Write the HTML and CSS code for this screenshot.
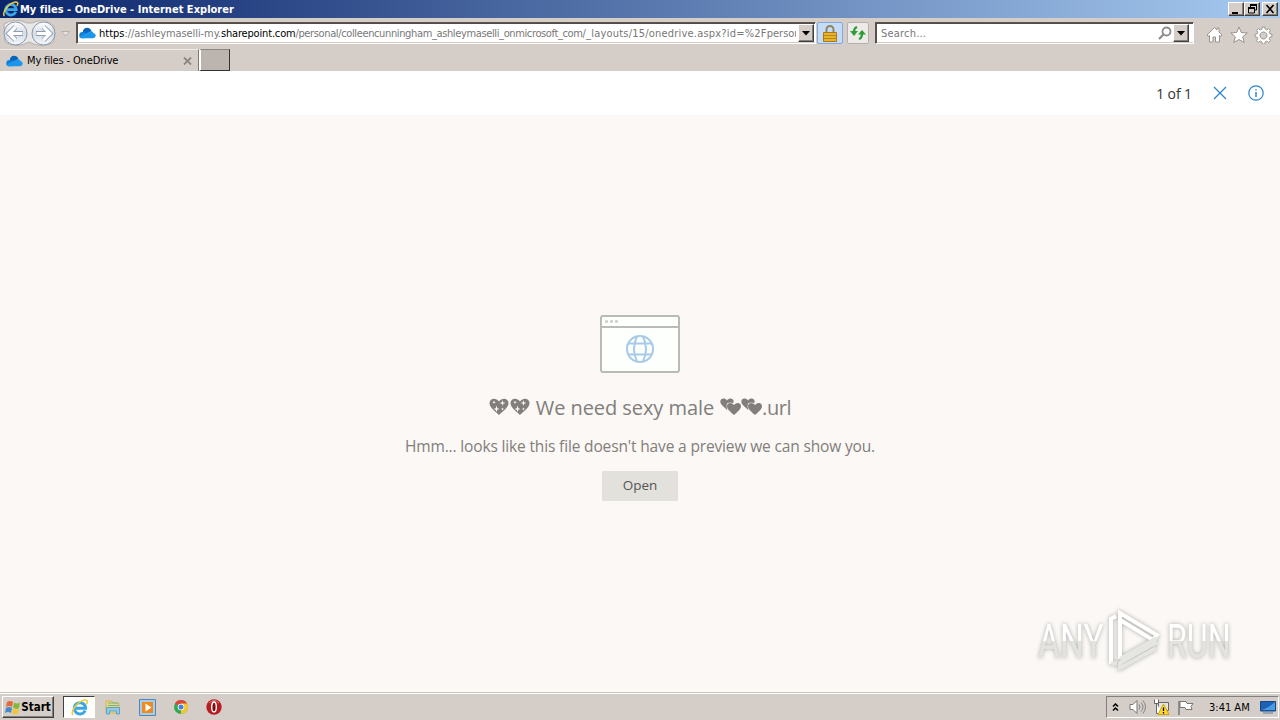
FILE: index.html
```
<!DOCTYPE html>
<html lang="en">
<head>
    <meta charset="UTF-8">
    <meta name="viewport" content="width=device-width, initial-scale=1.0">
    <title>My files - OneDrive</title>
    <link rel="stylesheet" href="styles.css">
</head>
<body>
    <!-- shared shapes -->
    <svg class="defs" width="0" height="0">
        <defs>
            <linearGradient id="orb" x1="0" y1="0" x2="0" y2="1">
                <stop offset="0" stop-color="#ffffff"/>
                <stop offset="0.5" stop-color="#d3dbe6"/>
                <stop offset="1" stop-color="#f6f9fd"/>
            </linearGradient>
            <symbol id="cloud" viewBox="0 0 16 11">
                <path d="M3.500 5C3.500 2 5.500 .5 7.500 .5c2 0 3.500 1 4.200 3L9 7 3 9z" fill="#0a64b8"/>
                <path d="M3 10.500a3 3 0 0 1 .5-6c2 0 3 1 4.500 2L6 10.500z" fill="#1180d8"/>
                <path d="M3 10.500c-1.500 0-2.500-.7-2.800-1.500L9 4.500c1-1 4.300-1 4.600 1.200 3 .4 2.800 4.600-.6 4.800z" fill="#1c96ec"/>
            </symbol>
            <symbol id="ie" viewBox="0 0 16 16">
                <path d="M13.300 10.800A5.300 5.300 0 1 1 13.700 8.600H4.500" fill="none" stroke="#3ba5e6" stroke-width="2.800"/>
                <path d="M2 15C-1 12 6 2 13 1c3-.3 2.500 2 1.500 3.800" fill="none" stroke="#f2cb35" stroke-width="1.500"/>
            </symbol>
            <symbol id="heart" viewBox="0 0 20 17">
                <path d="M10 17C6 13 .5 9.500 .5 5 .5 0 7 -1 10 3.500 13 -1 19.500 0 19.500 5 19.500 9.500 14 13 10 17z"/>
            </symbol>
            <symbol id="sparkle-heart" viewBox="0 0 20 17">
                <use href="#heart" width="20" height="17"/>
                <path d="M13.500 2l.6 2.300 2.400.7-2.400.7-.6 2.300-.6-2.300-2.400-.7 2.400-.7zM7.500 7.500l.8 2.700 2.200.8-2.200.8-.8 2.200-.8-2.200L4.500 11l2.200-.8zM5 2.500l.5 1.300 1.300.5-1.300.5L5 6.100l-.5-1.300-1.300-.5 1.300-.5zM13.500 9.500l.4 1.100 1.100.4-1.100.4-.4 1.100-.4-1.100-1.100-.4 1.100-.4z" fill="#fbf8f5"/>
            </symbol>
            <symbol id="two-hearts" viewBox="0 0 21 17">
                <use href="#heart" width="14" height="12"/>
                <use href="#heart" x="6.500" y="4.500" width="15" height="12.500" stroke="#fbf8f5" stroke-width="2"/>
                <use href="#heart" x="6.500" y="4.500" width="15" height="12.500"/>
            </symbol>
        </defs>
    </svg>

    <div class="titlebar">
        <svg class="title-icon" width="17" height="16"><use href="#ie"/></svg>
        <span class="window-title">My files - OneDrive - Internet Explorer</span>
        <div class="window-buttons">
            <button class="raised"><svg width="12" height="10"><path d="M2 8h6v2H2z"/></svg></button>
            <button class="raised"><svg width="12" height="10"><path d="M4.500 3V1h6v5H8" fill="none" stroke="#000"/><path d="M4 0h7v2H4zM2 3h7v2H2z"/><path d="M2.500 4v5h6V4" fill="none" stroke="#000"/></svg></button>
            <button class="raised close"><svg width="12" height="10"><path d="M2.500 1l7 8M9.500 1l-7 8" stroke="#000" stroke-width="1.700"/></svg></button>
        </div>
    </div>

    <div class="navbar">
        <svg class="nav-arrows" width="72" height="27">
            <path d="M4 4Q15-3 27 3h5q14-6 22 3v16Q42 29 29 22 17 29 5 22z" fill="#e9e8e8" stroke="#b4b0ae"/>
            <g fill="url(#orb)" stroke="#8995a6"><circle cx="15.500" cy="13.500" r="11.500"/><circle cx="43.500" cy="13.500" r="11.500"/></g>
            <path d="M23 13.500H9M15.500 7l-6.500 6.500 6.500 6.500M36 13.500h14M43.500 7l6.500 6.500-6.500 6.500" fill="none" stroke="#8f9db0" stroke-width="5"/>
            <path d="M22.500 13.500H9M15.500 7l-6.500 6.500 6.500 6.500M36.500 13.500H50M43.500 7l6.500 6.500-6.500 6.500" fill="none" stroke="#fff" stroke-width="3.200"/>
            <path d="M61.500 11.500h8l-4 4.500z" fill="#e6e2dd" stroke="#b5b0aa"/>
        </svg>
        <div class="field address">
            <svg width="17" height="12"><use href="#cloud"/></svg>
            <div class="url"><b>https</b><span class="subdomain">://ashleymaselli-my.</span><b class="host">sharepoint.com</b><span class="site">/personal/colleencunningham_ashleymaselli_onmicrosoft_com</span><span class="page">/_layouts/15/onedrive.aspx?id=%2F</span><span>person</span></div>
            <button class="raised drop"><svg width="8" height="5"><path d="M0 0h8L4 4.500z"/></svg></button>
        </div>
        <div class="tool lock">
            <svg width="14" height="17"><path d="M3.500 8V4.500a3.500 3.500 0 0 1 7 0V8" fill="none" stroke="#94845d" stroke-width="2"/><path d="M.5 7.500h13v9H.5z" fill="#e9b42b" stroke="#ac7814"/><path d="M1 10.500h12M1 13.500h12" stroke="#bd8316"/></svg>
        </div>
        <div class="tool refresh">
            <svg width="16" height="14"><path d="M7 1Q4 2 4 6M9 13q3-1 3-5" fill="none" stroke="#2f9d37" stroke-width="2.200"/><path d="M0 5h8L4 10zM8 8.500h8L12 4z" fill="#2f9d37"/></svg>
        </div>
        <div class="field search">
            <span>Search...</span>
            <svg class="magnifier" width="14" height="14"><circle cx="8.500" cy="5.500" r="4" fill="none" stroke="#8b8b8b" stroke-width="1.800"/><path d="M5.500 8.500L1 13" stroke="#8b8b8b" stroke-width="2.200"/></svg>
            <button class="raised drop"><svg width="8" height="5"><path d="M0 0h8L4 4.500z"/></svg></button>
        </div>
        <svg class="commands" width="68" height="18" fill="#fff" stroke="#98938f">
            <path d="M1 9l7.500-7.500 2.500 2.500V2h2v4l3 3-1 1.500-1.500-1V16h-4v-5H7v5H3.500V9.500L2 10.500z"/>
            <path d="M33 1l2.300 5.500 6 .5-4.600 3.800 1.500 5.700-5.200-3-5.200 3 1.500-5.700L24.700 7l6-.5z"/>
            <path fill-rule="evenodd" d="M56.300 1h2.400l.5 2.100 1.500.7 2-1.200 1.700 1.700-1.200 2 .7 1.500 2.100.5v2.400l-2.100.5-.7 1.500 1.200 2-1.700 1.700-2-1.200-1.500.7-.5 2.100h-2.400l-.5-2.100-1.500-.7-2 1.200-1.700-1.700 1.200-2-.7-1.500-2.100-.5V8.300l2.100-.5.7-1.500-1.200-2 1.700-1.700 2 1.200 1.500-.7zM57.500 6a3.500 3.500 0 1 0 .01 0z"/>
        </svg>
    </div>

    <div class="tabs">
        <div class="tab">
            <svg width="17" height="12"><use href="#cloud"/></svg>
            <span>My files - OneDrive</span>
            <svg class="tab-close" width="9" height="8"><path d="M1 .5l7 7M8 .5l-7 7" stroke="#8a8580" stroke-width="1.800"/></svg>
        </div>
        <div class="new-tab"></div>
    </div>

    <div class="viewer-bar">
        <span class="count">1 of 1</span>
        <svg class="viewer-close" width="14" height="14"><path d="M1 1l12 12M13 1L1 13" stroke="#2a83c9" stroke-width="1.200"/></svg>
        <svg class="viewer-info" width="16" height="16"><circle cx="8" cy="8" r="7.200" fill="none" stroke="#2a83c9" stroke-width="1.200"/><path d="M8 7v5M8 4.300v1.300" stroke="#1b70bb" stroke-width="1.300"/></svg>
    </div>

    <div class="viewer">
        <svg class="preview-icon" width="80" height="58">
            <rect x="1" y="1" width="78" height="56" rx="2" fill="#fdfffc" stroke="#babbb7" stroke-width="2"/>
            <path d="M1 12h78" stroke="#babbb7" stroke-width="2"/>
            <path d="M5 6.500h3m2 0h3m2 0h3" stroke="#cecfca" stroke-width="2.500"/>
            <g fill="none" stroke="#a6cae8" stroke-width="2"><circle cx="40" cy="34" r="13"/><path d="M37 21.500q-6 12.500 0 25M43 21.500q6 12.500 0 25M28 28.500h24M28 39.500h24"/></g>
        </svg>
        <h1>
            <svg width="20" height="17"><use href="#sparkle-heart"/></svg>
            <svg class="second" width="20" height="17"><use href="#sparkle-heart"/></svg>
            <span class="file-name">We need sexy male</span>
            <svg width="21" height="17"><use href="#two-hearts"/></svg>
            <svg width="21" height="17"><use href="#two-hearts"/></svg>
            <span class="file-ext">.url</span>
        </h1>
        <p>Hmm... looks like this file doesn't have a preview we can show you.</p>
        <button class="open">Open</button>
        <div class="watermark">
            <span class="any">ANY</span>
            <svg width="60" height="66" fill="none" stroke-width="4">
                <path class="upper" d="M8 56V11l5-3M17 51V5l37 22-4 5L17 12"/>
                <path class="lower" d="M17 51l37-21M8 56l6-1M54 34L17 55v5l36-20"/>
            </svg>
            <span class="run">RUN</span>
        </div>
    </div>

    <div class="taskbar">
        <button class="raised start">
            <svg width="16" height="15"><path d="M2 2q3-2 6 0L7 7Q4 5 1 7z" fill="#e5683a"/><path d="M9 2.500q3 2 6 0L14 8q-3 2-6-.5z" fill="#87b83e"/><path d="M1 8q3-2 6 0l-1 5q-3-2-6 0z" fill="#4389cc"/><path d="M8 8.500q3 2 6 0l-1 5q-3 2-6-.5z" fill="#f3c63a"/></svg>
            <span>Start</span>
        </button>
        <div class="task active"><svg width="17" height="17"><use href="#ie"/></svg></div>
        <svg class="explorer" width="16" height="16"><path d="M1 2h6l1 2h6v10H1z" fill="#f1d57d" stroke="#d4b55d"/><path d="M3 4h10M3 6.500h11" stroke="#72b78c"/><path d="M1.500 15V8.500h13V15h-3v-3h-7v3z" fill="#8fcbe8" stroke="#58a5cc"/></svg>
        <svg class="player" width="17" height="17"><path d="M.5 .5h16v16H.5z" fill="#a5cdee" stroke="#5685b5"/><path d="M3 3h11v11H3z" fill="#f08a1c"/><path d="M6.500 4.500v8l6-4z" fill="#fff"/></svg>
        <svg class="chrome" width="14" height="14"><circle cx="7" cy="7" r="7" fill="#34a853"/><path d="M7 7L.9 3.500a7 7 0 0 1 12.200 0z" fill="#dc4637"/><path d="M7 7V3.500h6.100A7 7 0 0 1 7 14z" fill="#f6c631"/><circle cx="7" cy="7" r="3.300" fill="#fff"/><circle cx="7" cy="7" r="2.500" fill="#4285d4"/></svg>
        <svg class="opera" width="16" height="16"><circle cx="8" cy="8" r="7.700" fill="#b51d20"/><path d="M3 4q5-5 10 0" fill="none" stroke="#df7773"/><ellipse cx="8" cy="8" rx="2.300" ry="5" fill="#7c0d12" stroke="#fff" stroke-width="1.400"/></svg>
        <div class="tray">
            <svg class="chevrons" width="7" height="9"><path d="M1 3.500L3.500 1 6 3.500M1 7.500L3.500 5 6 7.500" fill="none" stroke="#000" stroke-width="1.500"/></svg>
            <svg class="volume" width="17" height="16"><path d="M1 5.500h3l4-4v13l-4-4H1z" fill="#fff" stroke="#777"/><path d="M10 5.500q2 2.500 0 5M12 3.500q4 4.500 0 9M14 1.500q5 6.500 0 13" fill="none" stroke="#858585"/></svg>
            <svg class="network" width="17" height="16"><path d="M5.500 3.500h10v8h-10z" fill="#e4e4e0" stroke="#666"/><path d="M1.500 .5v4h4v-4M3.500 5v9.500h7" fill="#fff" stroke="#666"/><path d="M10.500 5l5.500 10.500H5z" fill="#ffdb29" stroke="#cba414"/><path d="M10.500 8.500v3.500m0 1v1.500" stroke="#000" stroke-width="1.300"/></svg>
            <svg class="flag" width="17" height="15"><path d="M2 1v14" stroke="#777" stroke-width="1.500"/><path d="M3 1.500h6l1 2h6l-2 3 1 3H9l-1-2H3z" fill="#fff" stroke="#777"/></svg>
            <span class="clock">3:41 AM</span>
            <svg class="desktop" width="16" height="13"><path d="M.5 .5h15v9.500H.5z" fill="#1d61b7" stroke="#194781"/><path d="M1 9Q7 8 15 1v8z" fill="#4b9be0"/><path d="M3 12h10" stroke="#56799c"/></svg>
        </div>
    </div>
</body>
</html>
```

FILE: styles.css
```
* { margin: 0; padding: 0; box-sizing: border-box; }
html, body { width: 1280px; height: 720px; overflow: hidden; }
body {
    display: flex;
    flex-direction: column;
    background: #d5cec8;
    color: #000;
    font-family: "DejaVu Sans Condensed", "DejaVu Sans", sans-serif;
    font-stretch: condensed;
    font-size: 11px;
}
svg { display: block; flex: none; }
.defs { position: absolute; }
span, b { white-space: nowrap; }
button { font: inherit; }
.raised {
    display: flex;
    align-items: center;
    justify-content: center;
    background: #d5cec8;
    border: 1px solid;
    border-color: #fff #404040 #404040 #fff;
    box-shadow: inset -1px -1px #85807b;
}

/* window chrome */
.titlebar {
    display: flex;
    align-items: center;
    height: 18px;
    padding: 0 2px;
    background: linear-gradient(90deg, #0a246a, #a6caf0);
}
.window-title {
    margin-left: 1px;
    color: #fff;
    font-weight: bold;
    letter-spacing: 0.02px;
}
.window-buttons {
    display: flex;
    margin-left: auto;
}
.window-buttons button { width: 16px; height: 14px; }
.window-buttons .close { margin-left: 2px; }
.navbar {
    display: flex;
    height: 30px;
    padding-top: 2px;
}
.field {
    display: flex;
    align-items: center;
    height: 22px;
    margin-top: 2px;
    background: #fff;
    border: 1px solid;
    border-color: #5c534e #fff #fff #5c534e;
    box-shadow: inset 1px 1px #554c48, inset 0 -1px #d5cec8;
}
.nav-arrows { margin-right: 4px; }
.address {
    width: 740px;
    padding-left: 2px;
}
.url {
    display: flex;
    width: 697px;
    margin: 0 2px 0 3px;
    padding-top: 1px;
    overflow: hidden;
    color: #777;
}
.url b { color: #000; font-weight: normal; }
.subdomain { letter-spacing: -0.08px; }
.url .host { letter-spacing: -0.17px; }
.site { letter-spacing: -0.37px; }
.page { letter-spacing: 0.2px; }
.drop { width: 16px; height: 18px; }
.tool {
    display: flex;
    align-items: center;
    justify-content: center;
    height: 22px;
    margin-top: 2px;
    border: 1px solid #b6b0ac;
    border-radius: 2px;
    background: #edeae7;
}
.lock {
    width: 26px;
    margin-left: 1px;
    border-color: #82aae0;
    background: #c5dcf8;
}
.refresh {
    width: 22px;
    margin: 2px 6px 0 4px;
}
.search {
    width: 319px;
    padding: 0 4px 0 5px;
    color: #777;
    letter-spacing: 0.2px;
}
.magnifier { margin: 0 1px 0 auto; }
.commands { margin: 6px 0 0 12px; }
.tabs {
    display: flex;
    height: 23px;
    border-top: 1px solid #d5cec8;
}
.tab {
    display: flex;
    align-items: center;
    width: 199px;
    padding: 0 6px;
    border-top: 1px solid #f0ece8;
    border-right: 1px solid #807a75;
    letter-spacing: -0.15px;
}
.tab span { margin-left: 4px; }
.tab-close { margin-left: auto; }
.new-tab {
    width: 31px;
    height: 22px;
    background: #bcb4af;
    border: 1px solid;
    border-color: #8c8580 #38322f #38322f #fff;
    border-left-width: 2px;
}

/* file viewer */
.viewer-bar {
    display: flex;
    align-items: center;
    justify-content: flex-end;
    height: 44px;
    padding-right: 16px;
    background: #fff;
    font-family: "Open Sans", sans-serif;
    font-stretch: normal;
    font-size: 14px;
    color: #333;
}
.count { letter-spacing: -0.1px; }
.viewer-close { margin-left: 21px; }
.viewer-info { margin: -1px 0 0 21px; }
.viewer {
    position: relative;
    display: flex;
    flex-direction: column;
    align-items: center;
    height: 577px;
    background: #fbf8f5;
    color: #817e7b;
    font-family: "Open Sans", sans-serif;
    font-stretch: normal;
}
.preview-icon { margin-top: 200px; }
.viewer h1 {
    display: flex;
    align-items: center;
    height: 30px;
    margin-top: 19px;
    font-size: 20px;
    font-weight: normal;
    fill: #817e7b;
}
.viewer h1 svg { margin-top: -2px; }
.viewer h1 .second { margin-left: 1px; }
.file-name { margin: 0 6px; letter-spacing: -0.06px; }
.file-ext { letter-spacing: -0.4px; }
.viewer p {
    margin-top: 13px;
    font-size: 15.5px;
    line-height: 22px;
    letter-spacing: -0.15px;
    white-space: nowrap;
}
.open {
    width: 76px;
    height: 30px;
    margin-top: 14px;
    padding-bottom: 2px;
    border: none;
    background: #e3e1dc;
    color: #555;
    font-size: 13.5px;
}
.watermark {
    position: absolute;
    left: 1038px;
    top: 493px;
    display: flex;
    align-items: center;
    height: 66px;
    filter: drop-shadow(0 0 2px #aaa9a4);
    font-family: Roboto, sans-serif;
    font-size: 48px;
}
.watermark span {
    width: 100px;
    color: transparent;
    background: linear-gradient(#fff 50%, #e3e3df 50%);
    -webkit-background-clip: text;
    background-clip: text;
    transform-origin: left;
}
.upper { stroke: #fff; }
.lower { stroke: #e5e5e1; }
.watermark .any { margin-right: -35px; transform: scaleX(0.7); }
.watermark .run { margin-left: 4px; transform: scaleX(0.67); }

/* taskbar */
.taskbar {
    display: flex;
    align-items: center;
    height: 28px;
    padding: 1px 1px 0 2px;
    border-top: 1px solid #c9c3bd;
    box-shadow: inset 0 1px #fff;
}
.start {
    width: 52px;
    height: 22px;
    font-size: 11.5px;
    font-weight: bold;
}
.task {
    display: flex;
    align-items: center;
    justify-content: center;
    width: 32px;
    height: 22px;
    margin-left: 9px;
    background: #fff;
    border: 1px solid;
    border-color: #404040 #fff #fff #404040;
}
.explorer { margin-left: 10px; }
.player { margin-left: 18px; }
.chrome { margin-left: 18px; }
.opera { margin-left: 18px; }
.tray {
    display: flex;
    align-items: center;
    width: 173px;
    height: 22px;
    margin-left: auto;
    padding-left: 5px;
    border: 1px solid;
    border-color: #85807b #fff #fff #85807b;
}
.volume { margin-left: 10px; }
.network { margin-left: 7px; }
.flag { margin-left: 7px; }
.clock { margin-left: 15px; width: 41px; }
.desktop { margin-left: 10px; }
```
